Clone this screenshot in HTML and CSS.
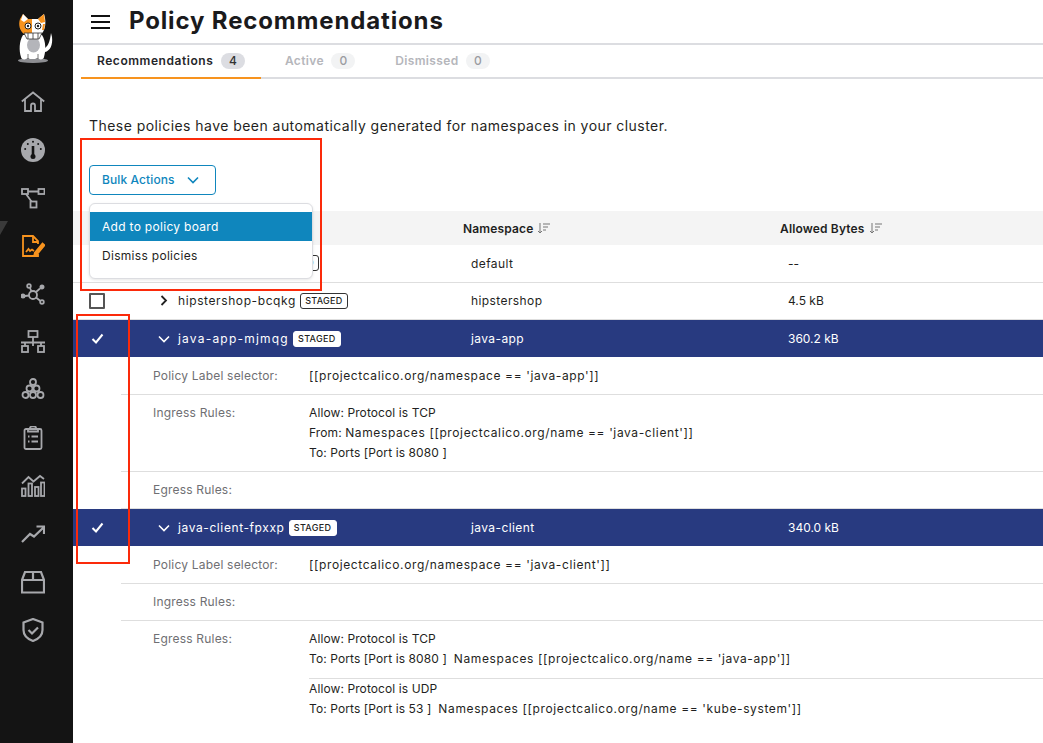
FILE: index.html
```html
<!DOCTYPE html>
<html lang="en">
<head>
  <meta charset="UTF-8">
  <title>Policy Recommendations</title>
  <link rel="stylesheet" href="styles.css">
</head>
<body>
  <div class="app">
    <nav class="sidebar">
      <div class="logo">
        <svg width="36" height="52" viewBox="0 0 36 52">
          <ellipse cx="15" cy="46.500" rx="15" ry="2.500" fill="#8d8e92"/>
          <path d="M27 38c5-1 8-7 7-15l-1-4c-1 7-2 12-6 15z" fill="#fff"/>
          <path d="M5 21C1 27 1 37 3 43c0 2 3 3 5 2l2-1 2 1h5l2-1 2 1c2 1 5 0 5-2 2-6 2-16-2-22z" fill="#fff"/>
          <ellipse cx="15.500" cy="31" rx="6.500" ry="7.500" fill="#b4b5ba"/>
          <path d="M10 40v5M20 40v5" stroke="#555" stroke-width="0.800"/>
          <path d="M5 0l5 5h5v15H6C2 17 0 11 2 5z" fill="#f7931e"/>
          <path d="M5 0l5 5-4 3-3-2z" fill="#fff"/>
          <path d="M14 5h6l6-5c2 6 2 13-1 18l-3 3-8-1z" fill="#fff"/>
          <path d="M20 5l6-5 1 8-4 1z" fill="#f7931e"/>
          <path d="M25 10h2l-1 6h-2z" fill="#f7931e"/>
          <circle cx="10" cy="12" r="3" fill="#fff" stroke="#222"/>
          <circle cx="20" cy="12" r="3" fill="#fff" stroke="#222"/>
          <circle cx="10" cy="12" r="1.200" fill="#222"/>
          <circle cx="20" cy="12" r="1.200" fill="#222"/>
          <path d="M6 19h18l-3 6H9z" fill="#fff" stroke="#333" stroke-width="0.800"/>
          <path d="M10 19v6M15 19v6M20 19v6" stroke="#333" stroke-width="0.800"/>
        </svg>
      </div>
      <a class="nav-item">
        <svg viewBox="0 0 24 24" class="nav-icon"><path d="M.8 11.500L12 2.500l11.200 9M4 9.500V21h6v-5.500a2 2 0 0 1 4 0V21h6V9.500"/></svg>
      </a>
      <a class="nav-item">
        <svg viewBox="0 0 24 24" class="nav-icon"><circle cx="12" cy="12" r="12" fill="#a7a8ac" stroke="none"/><path d="M12 8v10" stroke="#141414" stroke-width="2.600"/><circle cx="12" cy="18.500" r="2.500" fill="#141414" stroke="none"/><g fill="#141414" stroke="none"><circle cx="12" cy="3.800" r="1"/><circle cx="6.800" cy="6" r="1"/><circle cx="17.200" cy="6" r="1"/><circle cx="4.200" cy="11" r="1"/><circle cx="19.800" cy="11" r="1"/></g></svg>
      </a>
      <a class="nav-item">
        <svg viewBox="0 0 24 24" class="nav-icon"><rect x="1" y="3" width="6" height="5"/><rect x="17.500" y="3" width="6" height="5"/><rect x="9.500" y="15.500" width="6" height="6"/><path d="M7 5.500h10.500M5 8l5.500 7.500"/></svg>
      </a>
      <a class="nav-item">
        <svg viewBox="0 0 24 24" class="nav-icon nav-icon-active"><path d="M17 20v2H2V2h10l5 5v3"/><path d="M12 2v6h5"/><path d="M5 18l2.500-3 1.500 2 2-1.500 2 1.500"/><path d="M14 18.500l7.500-9 2 1.800-7.500 9-2.700.8z" fill="#f7931e"/></svg>
      </a>
      <a class="nav-item">
        <svg viewBox="0 0 24 24" class="nav-icon"><circle cx="12" cy="13" r="4"/><circle cx="8" cy="4" r="1.800"/><circle cx="21" cy="5" r="1.600" fill="#a7a8ac"/><circle cx="21" cy="20" r="1.800"/><circle cx="2" cy="14" r="1.600" fill="#a7a8ac"/><path d="M9 6l1.500 3.500M15 10l4-3.500M15 15.500l4.500 3.500M8 13.500l-4 .5"/></svg>
      </a>
      <a class="nav-item">
        <svg viewBox="0 0 24 24" class="nav-icon"><rect x="7.500" y="1" width="9" height="6"/><path d="M12 7v5M0 12.500h24M4 12.500V16M20 12.500V16M12 12.500V16"/><rect x="1" y="16" width="6" height="6"/><rect x="17" y="16" width="6" height="6"/></svg>
      </a>
      <a class="nav-item">
        <svg viewBox="0 0 24 24" class="nav-icon"><circle cx="12" cy="4" r="3"/><circle cx="8.500" cy="10.500" r="3"/><circle cx="15.500" cy="10.500" r="3"/><circle cx="4.500" cy="17" r="3"/><circle cx="12" cy="17" r="3"/><circle cx="19.500" cy="17" r="3"/></svg>
      </a>
      <a class="nav-item">
        <svg viewBox="0 0 24 24" class="nav-icon"><rect x="3.500" y="3" width="17" height="20" rx="1.500"/><path d="M9 3V1.800a3 1.500 0 0 1 6 0V3h2v2.500H7V3zM10.500 10.500H17M10.500 15.500H17M7 10.500h1.500M7 15.500h1.500"/></svg>
      </a>
      <a class="nav-item">
        <svg viewBox="0 0 24 24" class="nav-icon"><path d="M1 9.500L7.500 3l5 4.500L19 2l4 3"/><rect x="1" y="14.500" width="3.500" height="7.500"/><rect x="7.500" y="9.500" width="3.500" height="12.500"/><rect x="14" y="13" width="3.500" height="9"/><rect x="20" y="8.500" width="3.500" height="13.500"/></svg>
      </a>
      <a class="nav-item">
        <svg viewBox="0 0 24 24" class="nav-icon nav-icon-bold"><path d="M1 20l8-8 4 2.500L23 5M15.500 4.500H23v7.500"/></svg>
      </a>
      <a class="nav-item">
        <svg viewBox="0 0 24 24" class="nav-icon nav-icon-bold"><path d="M1 10l3-8h16l3 8v12.500H1zM1 10h22M12 2v8"/></svg>
      </a>
      <a class="nav-item">
        <svg viewBox="0 0 24 24" class="nav-icon nav-icon-bold"><path d="M12 1l9.500 3.500v7.500c0 5.500-4 9-9.500 11-5.500-2-9.500-5.500-9.500-11V4.500z"/><path d="M7.500 12l3.500 3.500 6-6"/></svg>
      </a>
    </nav>
    <div class="sidebar-notch"></div>

    <main class="main">
      <header class="topbar">
        <div class="burger"><span></span><span></span><span></span></div>
        <h1>Policy Recommendations</h1>
      </header>

      <div class="tabs">
        <div class="tab tab-active">Recommendations <span class="count">4</span></div>
        <div class="tab">Active <span class="count">0</span></div>
        <div class="tab">Dismissed <span class="count">0</span></div>
      </div>

      <p class="intro">These policies have been automatically generated for namespaces in your cluster.</p>

      <button class="bulk-btn"><span class="bulk-label">Bulk Actions</span>
        <svg width="12" height="8" viewBox="0 0 12 8"><path d="M1 1.500l5 5 5-5" fill="none" stroke="#0f86bd" stroke-width="1.600"/></svg>
      </button>

      <div class="table">
        <div class="row row-head">
          <div></div>
          <div></div>
          <div class="th th-ns">Namespace
            <svg class="sort" width="13" height="11" viewBox="0 0 13 11"><path d="M3 0v10M1 8l2 2 2-2M6 1h7M6 4h5M6 7h3" fill="none" stroke="#777" stroke-width="1"/></svg>
          </div>
          <div class="th">Allowed Bytes
            <svg class="sort" width="13" height="11" viewBox="0 0 13 11"><path d="M3 0v10M1 8l2 2 2-2M6 1h7M6 4h5M6 7h3" fill="none" stroke="#777" stroke-width="1"/></svg>
          </div>
        </div>

        <div class="row row-plain">
          <div></div>
          <div class="name name-hidden"><span class="staged">STAGED</span></div>
          <div class="cell cell-ns">default</div>
          <div class="cell">--</div>
        </div>

        <div class="row row-plain">
          <div class="check-cell"><span class="checkbox"></span></div>
          <div class="name">
            <svg class="caret" width="12" height="11" viewBox="0 0 12 11"><path d="M3.500 1l4.500 4.500L3.500 10" fill="none" stroke="#222" stroke-width="1.800"/></svg>
            <span class="name-text">hipstershop-bcqkg</span>
            <span class="staged">STAGED</span>
          </div>
          <div class="cell cell-ns">hipstershop</div>
          <div class="cell">4.5 kB</div>
        </div>

        <div class="row row-selected">
          <div class="check-cell"><svg width="13" height="11" viewBox="0 0 13 11"><path d="M1.500 6l3.500 3.500 6.500-8" fill="none" stroke="#fff" stroke-width="2"/></svg></div>
          <div class="name">
            <svg class="caret" width="12" height="8" viewBox="0 0 12 8"><path d="M1 1.500l5 5 5-5" fill="none" stroke="#fff" stroke-width="1.600"/></svg>
            <span class="name-text name-text-wide">java-app-mjmqg</span>
            <span class="staged staged-light">STAGED</span>
          </div>
          <div class="cell cell-ns">java-app</div>
          <div class="cell">360.2 kB</div>
        </div>

        <div class="detail detail-first">
          <div class="detail-label">Policy Label selector:</div>
          <div class="detail-value"><span class="sel">[[projectcalico.org/namespace == 'java-app']]</span></div>
        </div>
        <div class="detail">
          <div class="detail-label">Ingress Rules:</div>
          <div class="detail-value">
            <div>Allow: Protocol is TCP</div>
            <div>From: <span class="sel">Namespaces [[projectcalico.org/name == 'java-client']]</span></div>
            <div>To: Ports [Port is 8080 ]</div>
          </div>
        </div>
        <div class="detail">
          <div class="detail-label">Egress Rules:</div>
          <div class="detail-value"></div>
        </div>

        <div class="row row-selected">
          <div class="check-cell"><svg width="13" height="11" viewBox="0 0 13 11"><path d="M1.500 6l3.500 3.500 6.500-8" fill="none" stroke="#fff" stroke-width="2"/></svg></div>
          <div class="name">
            <svg class="caret" width="12" height="8" viewBox="0 0 12 8"><path d="M1 1.500l5 5 5-5" fill="none" stroke="#fff" stroke-width="1.600"/></svg>
            <span class="name-text">java-client-fpxxp</span>
            <span class="staged staged-light">STAGED</span>
          </div>
          <div class="cell cell-ns">java-client</div>
          <div class="cell">340.0 kB</div>
        </div>

        <div class="detail detail-first">
          <div class="detail-label">Policy Label selector:</div>
          <div class="detail-value"><span class="sel">[[projectcalico.org/namespace == 'java-client']]</span></div>
        </div>
        <div class="detail">
          <div class="detail-label">Ingress Rules:</div>
          <div class="detail-value"></div>
        </div>
        <div class="detail detail-end">
          <div class="detail-label">Egress Rules:</div>
          <div class="detail-value">
            <div class="rule">
              <div>Allow: Protocol is TCP</div>
              <div>To: Ports [Port is 8080 ]&nbsp; <span class="sel">Namespaces [[projectcalico.org/name == 'java-app']]</span></div>
            </div>
            <div class="rule">
              <div>Allow: Protocol is UDP</div>
              <div>To: Ports [Port is 53 ]&nbsp; <span class="sel">Namespaces [[projectcalico.org/name == 'kube-system']]</span></div>
            </div>
          </div>
        </div>
      </div>

      <div class="menu">
        <div class="menu-item menu-item-on">Add to policy board</div>
        <div class="menu-item">Dismiss policies</div>
      </div>
      <div class="callout callout-menu"></div>
      <div class="callout callout-checks"></div>
    </main>
  </div>
</body>
</html>
```

FILE: styles.css
```css
* {
  box-sizing: border-box;
}
html, body {
  height: 100%;
}
body {
  margin: 0;
  overflow: hidden;
  font-family: Inter, "Open Sans", sans-serif;
  font-size: 12px;
  color: #1f1f22;
  background-color: white;
}
.app {
  display: flex;
  height: 743px;
}
.sidebar {
  width: 73px;
  flex: none;
  padding-right: 7px;
  background-color: #141414;
  display: flex;
  flex-direction: column;
  align-items: center;
}
.logo {
  height: 78px;
  padding: 14px 0 0 6px;
}
.nav-item {
  height: 48px;
  flex: none;
  display: flex;
  align-items: center;
  justify-content: center;
}
.nav-icon {
  width: 24px;
  height: 24px;
  fill: none;
  stroke: #a7a8ac;
  stroke-width: 1.800;
}
.nav-icon-active {
  stroke: #f7931e;
}
.nav-icon-bold {
  stroke-width: 2.200;
}
.sidebar-notch {
  position: absolute;
  left: 0;
  top: 221px;
  width: 0;
  height: 0;
  border-top: 14px solid #3a3a3a;
  border-right: 8px solid transparent;
}
.main {
  flex: 1;
  position: relative;
  min-width: 0;
}
.topbar {
  height: 45px;
  border-bottom: 2px solid #dcdde1;
  display: flex;
  align-items: center;
  padding-left: 18px;
}
.burger {
  width: 19px;
  display: flex;
  flex-direction: column;
  gap: 4px;
  margin-right: 19px;
}
.burger span {
  display: block;
  height: 2px;
  background-color: #111;
}
h1 {
  margin: 0 0 2px;
  font-size: 24px;
  font-weight: 700;
  letter-spacing: 0.85px;
  color: #1a1a1c;
}
.tabs {
  height: 34px;
  margin-left: 8px;
  border-bottom: 2px solid #dcdde1;
  display: flex;
  gap: 8px;
}
.tab {
  height: 34px;
  padding: 8px 16px 0;
  font-size: 12px;
  font-weight: 600;
  letter-spacing: 0.35px;
  color: #b5b6bb;
  white-space: nowrap;
}
.tab-active {
  letter-spacing: 0.55px;
  color: #26262a;
  border-bottom: 2px solid #f7931e;
}
.count {
  display: inline-block;
  width: 24px;
  height: 16px;
  line-height: 16px;
  margin-left: 4px;
  text-align: center;
  letter-spacing: 0;
  border-radius: 8px;
  background-color: #f2f3f4;
  color: #9b9ca1;
  font-weight: 500;
}
.tab-active .count {
  background-color: #dcdde2;
  color: #333;
}
.intro {
  margin: 0;
  padding: 37px 0 0 16px;
  font-size: 14px;
  line-height: 20px;
  letter-spacing: 0.45px;
  height: 86px;
}
.bulk-btn {
  display: flex;
  align-items: center;
  gap: 12px;
  width: 127px;
  height: 30px;
  margin-left: 16px;
  padding: 0 0 0 12px;
  background-color: white;
  border: 1px solid #0f86bd;
  border-radius: 4px;
  color: #0f86bd;
  font-family: inherit;
  font-size: 12px;
  font-weight: 500;
}
.bulk-label {
  padding-bottom: 2px;
  letter-spacing: 0.1px;
}
.table {
  margin-top: 16px;
}
.row {
  display: grid;
  grid-template-columns: 48px 342px 317px 1fr;
  align-items: center;
}
.row-head {
  height: 34px;
  background-color: #f4f4f4;
}
.row-plain {
  height: 37.5px;
  border-bottom: 1px solid #dedede;
}
.row-selected {
  height: 37px;
  background-color: #283a80;
  color: white;
}
.th {
  font-weight: 600;
  letter-spacing: 0.15px;
  display: flex;
  align-items: center;
  gap: 4px;
}
.cell {
  padding-left: 8px;
}
.cell-ns {
  letter-spacing: 0.4px;
}
.check-cell {
  display: flex;
  justify-content: center;
}
.checkbox {
  width: 16px;
  height: 16px;
  border: 2px solid #555;
  border-radius: 1px;
}
.name {
  display: flex;
  align-items: center;
  padding-left: 37px;
}
.name-hidden {
  padding-left: 150px;
}
.caret {
  margin-right: 8px;
}
.name-text {
  margin-right: 4px;
  letter-spacing: 0.6px;
}
.name-text-wide {
  letter-spacing: 1.2px;
}
.staged {
  display: inline-block;
  width: 48px;
  height: 16px;
  line-height: 14px;
  text-align: center;
  border: 1px solid #333;
  border-radius: 3px;
  font-size: 9px;
  font-weight: 500;
  letter-spacing: 0.3px;
}
.staged-light {
  background-color: white;
  color: #222;
  border-color: white;
}
.detail {
  display: flex;
  margin-left: 48px;
  padding: 8px 0 8px 32px;
  line-height: 20px;
  border-bottom: 1px solid #dedede;
}
.detail-first {
  padding-top: 9px;
}
.detail-end {
  border-bottom: none;
  padding-bottom: 0;
}
.detail-label {
  width: 156px;
  flex: none;
  letter-spacing: 0.2px;
  color: #6f6f73;
}
.detail-value {
  flex: 1;
  letter-spacing: 0.1px;
}
.sel {
  letter-spacing: 0.62px;
}
.rule {
  padding-bottom: 9px;
  border-bottom: 1px solid #dedede;
}
.rule:last-child {
  border-bottom: none;
}
.menu {
  position: absolute;
  left: 16px;
  top: 203px;
  width: 224px;
  height: 76px;
  padding-top: 8px;
  background-color: white;
  border: 1px solid #dcdde1;
  border-radius: 6px;
  box-shadow: 0 1px 3px rgba(0,0,0,0.1);
}
.menu-item {
  height: 29px;
  line-height: 30px;
  padding-left: 12px;
  font-size: 12px;
  letter-spacing: 0.3px;
}
.menu-item-on {
  background-color: #0f86bd;
  color: white;
}
.callout {
  position: absolute;
  border: 2px solid #fb2a0a;
}
.callout-menu {
  left: 7px;
  top: 138px;
  width: 242px;
  height: 153px;
}
.callout-checks {
  left: 3px;
  top: 314px;
  width: 54px;
  height: 250px;
}
```
